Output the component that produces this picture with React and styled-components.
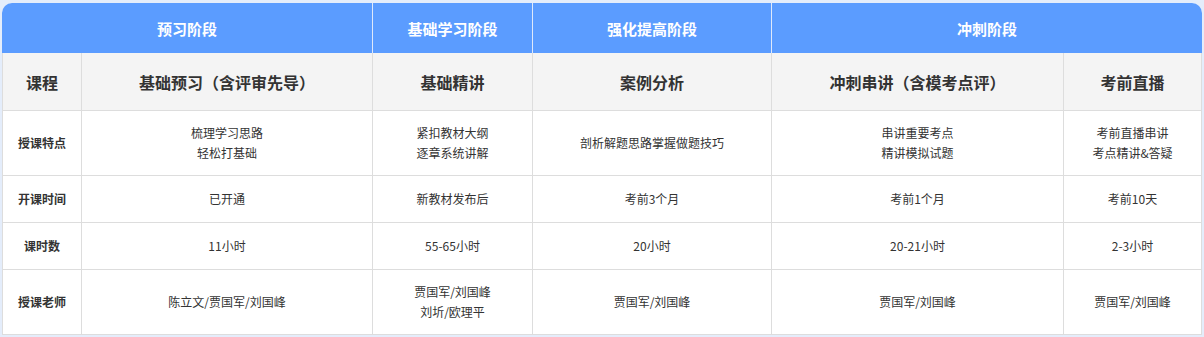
import React from "react";
import styled, { createGlobalStyle } from "styled-components";

const GlobalStyle = createGlobalStyle`
  html, body {
    margin: 0;
    padding: 0;
    background: #e4edfb;
  }
  body {
    font-family: "Microsoft YaHei", "Noto Sans CJK SC", "Noto Sans", sans-serif;
  }
`;

const Page = styled.div`
  padding: 3px 2px 0;
`;

const Wrap = styled.div`
  width: 1200px;
  border-radius: 10px 10px 0 0;
  overflow: hidden;
  background: #fff;
`;

const Table = styled.table`
  width: 1200px;
  table-layout: fixed;
  border-collapse: separate;
  border-spacing: 0;
  color: #333;
`;

const StageRow = styled.tr`
  height: 50px;
`;

const StageCell = styled.th`
  background: #5b9cff;
  color: #fff;
  font-size: 15px;
  font-weight: bold;
  text-align: center;
  padding: 0;
  border-right: 1px solid #dfe9fb;
  &:last-child {
    border-right: none;
  }
`;

const Row = styled.tr`
  height: ${(p) => p.$h}px;
`;

const Cell = styled.td`
  background: ${(p) => (p.$head ? "#f4f4f4" : "#fff")};
  font-size: ${(p) => (p.$head ? 16 : 12)}px;
  font-weight: ${(p) => (p.$head || p.$label ? "bold" : "normal")};
  line-height: 20px;
  text-align: center;
  vertical-align: middle;
  padding: 0 4px;
  border-right: 1px solid #ddd;
  border-bottom: 1px solid #ddd;
  box-sizing: border-box;
  &:first-child {
    border-left: 1px solid #ddd;
  }
`;

const stages = [
  { name: "预习阶段", span: 2 },
  { name: "基础学习阶段", span: 1 },
  { name: "强化提高阶段", span: 1 },
  { name: "冲刺阶段", span: 2 },
];

const courses = [
  "基础预习（含评审先导）",
  "基础精讲",
  "案例分析",
  "冲刺串讲（含模考点评）",
  "考前直播",
];

const rows = [
  {
    label: "授课特点",
    h: 65,
    cells: [
      ["梳理学习思路", "轻松打基础"],
      ["紧扣教材大纲", "逐章系统讲解"],
      ["剖析解题思路掌握做题技巧"],
      ["串讲重要考点", "精讲模拟试题"],
      ["考前直播串讲", "考点精讲&答疑"],
    ],
  },
  {
    label: "开课时间",
    h: 47,
    cells: [["已开通"], ["新教材发布后"], ["考前3个月"], ["考前1个月"], ["考前10天"]],
  },
  {
    label: "课时数",
    h: 47,
    cells: [["11小时"], ["55-65小时"], ["20小时"], ["20-21小时"], ["2-3小时"]],
  },
  {
    label: "授课老师",
    h: 65,
    cells: [
      ["陈立文/贾国军/刘国峰"],
      ["贾国军/刘国峰", "刘圻/欧理平"],
      ["贾国军/刘国峰"],
      ["贾国军/刘国峰"],
      ["贾国军/刘国峰"],
    ],
  },
];

const widths = [80, 291, 160, 239, 292, 138];

const App = () => {
  return (
    <>
      <GlobalStyle />
      <Page>
        <Wrap>
          <Table>
            <colgroup>
              {widths.map((w, i) => (
                <col key={i} style={{ width: w }} />
              ))}
            </colgroup>
            <thead>
              <StageRow>
                {stages.map((s) => (
                  <StageCell key={s.name} colSpan={s.span}>
                    {s.name}
                  </StageCell>
                ))}
              </StageRow>
              <Row $h={58}>
                <Cell $head>课程</Cell>
                {courses.map((c) => (
                  <Cell $head key={c}>
                    {c}
                  </Cell>
                ))}
              </Row>
            </thead>
            <tbody>
              {rows.map((r) => (
                <Row $h={r.h} key={r.label}>
                  <Cell $label>{r.label}</Cell>
                  {r.cells.map((lines, i) => (
                    <Cell key={i}>
                      {lines.map((l, j) => (
                        <div key={j}>{l}</div>
                      ))}
                    </Cell>
                  ))}
                </Row>
              ))}
            </tbody>
          </Table>
        </Wrap>
      </Page>
    </>
  );
};

export default App;
